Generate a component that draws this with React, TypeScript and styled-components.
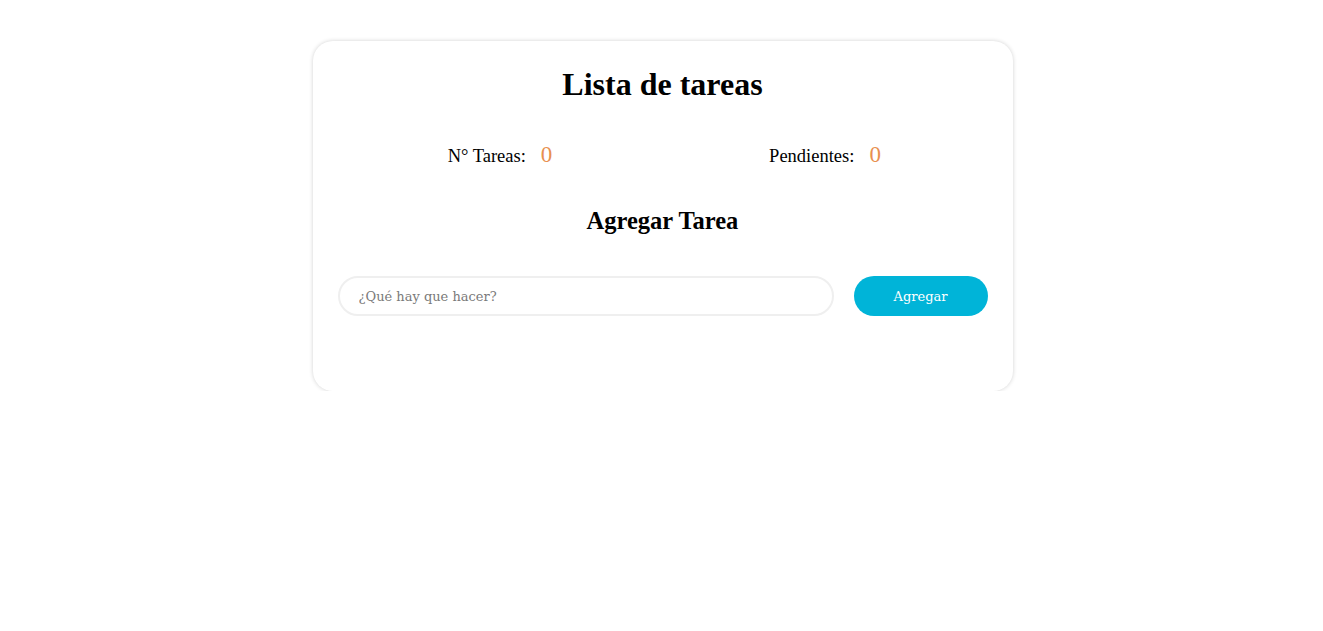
import React, { useState } from "react";
import styled, { createGlobalStyle } from "styled-components";

const Global = createGlobalStyle`
  html, body { margin: 0; padding: 0; background: #ffffff; }
  body { font-family: "Liberation Serif", "Times New Roman", serif; color: #000; }
`;

const Page = styled.div`
  display: flex;
  justify-content: center;
  padding-top: 41px;
`;

const Card = styled.div`
  width: 700px;
  box-sizing: border-box;
  margin-left: 2px;
  padding: 25px 25px 75px;
  border-radius: 20px;
  background: #fff;
  box-shadow: 0 0 4px rgba(0, 0, 0, 0.18);
  display: flex;
  flex-direction: column;
`;

const Title = styled.h1`
  margin: 0;
  text-align: center;
  font-size: 32px;
  font-weight: bold;
  line-height: 37px;
`;

const Stats = styled.div`
  display: grid;
  grid-template-columns: 1fr 1fr;
  margin-top: 39px;
`;

const Stat = styled.div`
  display: flex;
  justify-content: center;
  align-items: baseline;
  gap: 15px;
  font-size: 18.5px;
`;

const Count = styled.span`
  color: #e8904f;
  font-size: 23px;
`;

const SubTitle = styled.h2`
  margin: 39px 0 0;
  text-align: center;
  font-size: 24.5px;
  font-weight: bold;
  line-height: 28px;
`;

const Form = styled.form`
  display: flex;
  gap: 20px;
  margin-top: 41px;
`;

const Input = styled.input`
  flex: 1;
  height: 40px;
  box-sizing: border-box;
  border: 2px solid #efefef;
  border-radius: 20px;
  padding: 0 19px;
  font-family: "DejaVu Serif", serif;
  font-weight: 200;
  font-size: 13px;
  color: #333;
  outline: none;
  &::placeholder { color: #7a7a7a; }
`;

const Button = styled.button`
  width: 134px;
  height: 40px;
  border: none;
  border-radius: 20px;
  background: #00b4d8;
  color: #fff;
  font-family: "DejaVu Serif", serif;
  font-weight: 200;
  font-size: 13px;
  cursor: pointer;
`;

export default function App() {
  const [text, setText] = useState("");
  return (
    <>
      <Global />
      <Page>
        <Card>
          <Title>Lista de tareas</Title>
          <Stats>
            <Stat>N° Tareas: <Count>0</Count></Stat>
            <Stat>Pendientes: <Count>0</Count></Stat>
          </Stats>
          <SubTitle>Agregar Tarea</SubTitle>
          <Form onSubmit={(e) => e.preventDefault()}>
            <Input
              placeholder="¿Qué hay que hacer?"
              value={text}
              onChange={(e) => setText(e.target.value)}
            />
            <Button type="submit">Agregar</Button>
          </Form>
        </Card>
      </Page>
    </>
  );
}
